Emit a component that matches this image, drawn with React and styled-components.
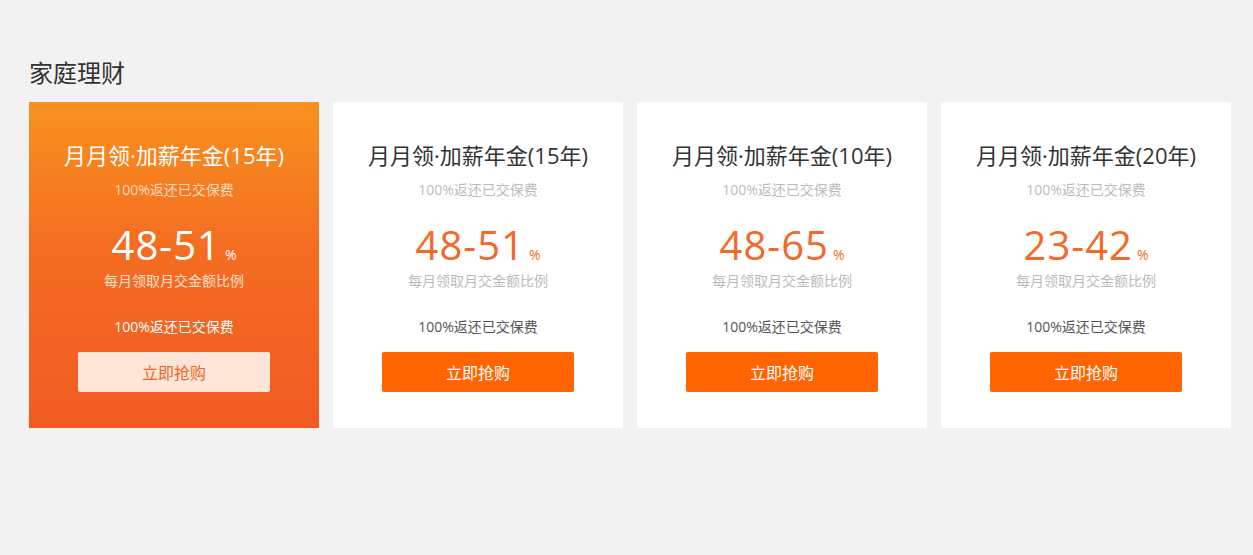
import React from "react";
import styled, { createGlobalStyle } from "styled-components";

const GlobalStyle = createGlobalStyle`
  html, body {
    margin: 0;
    padding: 0;
    background: #f2f2f2;
  }
  body {
    font-family: "Open Sans", "Noto Sans CJK SC", sans-serif;
  }
`;

const products = [
  { name: "月月领·加薪年金(15年)", range: "48-51", active: true },
  { name: "月月领·加薪年金(15年)", range: "48-51" },
  { name: "月月领·加薪年金(10年)", range: "48-65" },
  { name: "月月领·加薪年金(20年)", range: "23-42" },
];

const ProductCard = ({ product }) => {
  const { name, range, active } = product;
  return (
    <Card $active={active}>
      <CardTitle $active={active}>{name}</CardTitle>
      <SubText $active={active}>100%返还已交保费</SubText>
      <Rate $active={active}>
        {range}
        <Percent>%</Percent>
      </Rate>
      <RateLabel $active={active}>每月领取月交金额比例</RateLabel>
      <Note $active={active}>100%返还已交保费</Note>
      <BuyButton $active={active}>立即抢购</BuyButton>
    </Card>
  );
};

const App = () => {
  return (
    <Page>
      <GlobalStyle />
      <SectionTitle>家庭理财</SectionTitle>
      <CardRow>
        {products.map((p, i) => (
          <ProductCard key={i} product={p} />
        ))}
      </CardRow>
    </Page>
  );
};

export default App;

const Page = styled.div`
  width: 1253px;
  height: 555px;
  box-sizing: border-box;
  padding: 57px 0 0 29px;
  background: #f2f2f2;
`;

const SectionTitle = styled.h2`
  margin: 0 0 13px;
  font-size: 24px;
  line-height: 32px;
  font-weight: normal;
  color: #333;
`;

const CardRow = styled.div`
  display: flex;
  flex-direction: row;
  gap: 14px;
`;

const Card = styled.div`
  width: 290px;
  height: 326px;
  box-sizing: border-box;
  padding-top: 38px;
  display: flex;
  flex-direction: column;
  align-items: center;
  background: ${(p) =>
    p.$active ? "linear-gradient(to bottom, #f7921e 0%, #f46d22 45%, #f15a22 100%)" : "#fff"};
`;

const CardTitle = styled.div`
  font-size: 22px;
  line-height: 30px;
  color: ${(p) => (p.$active ? "#fff" : "#333")};
`;

const SubText = styled.div`
  margin-top: 11px;
  font-size: 14px;
  line-height: 18px;
  color: ${(p) => (p.$active ? "#fcd9bf" : "#bbb")};
`;

const Rate = styled.div`
  margin-top: 26px;
  font-size: 40px;
  line-height: 40px;
  letter-spacing: 1px;
  color: ${(p) => (p.$active ? "#fff" : "#f26a2a")};
`;

const Percent = styled.span`
  margin-left: 4px;
  font-size: 14px;
  line-height: 1;
  letter-spacing: 0;
`;

const RateLabel = styled.div`
  margin-top: 7px;
  font-size: 14px;
  line-height: 18px;
  color: ${(p) => (p.$active ? "#fde1cc" : "#bbb")};
`;

const Note = styled.div`
  margin-top: 28px;
  font-size: 14px;
  line-height: 18px;
  color: ${(p) => (p.$active ? "#fff" : "#555")};
`;

const BuyButton = styled.button`
  margin-top: 16px;
  width: 192px;
  height: 40px;
  border: none;
  border-radius: 2px;
  font-family: inherit;
  font-size: 16px;
  cursor: pointer;
  background: ${(p) => (p.$active ? "#fde5d8" : "#ff6400")};
  color: ${(p) => (p.$active ? "#f0652a" : "#fff")};
`;
